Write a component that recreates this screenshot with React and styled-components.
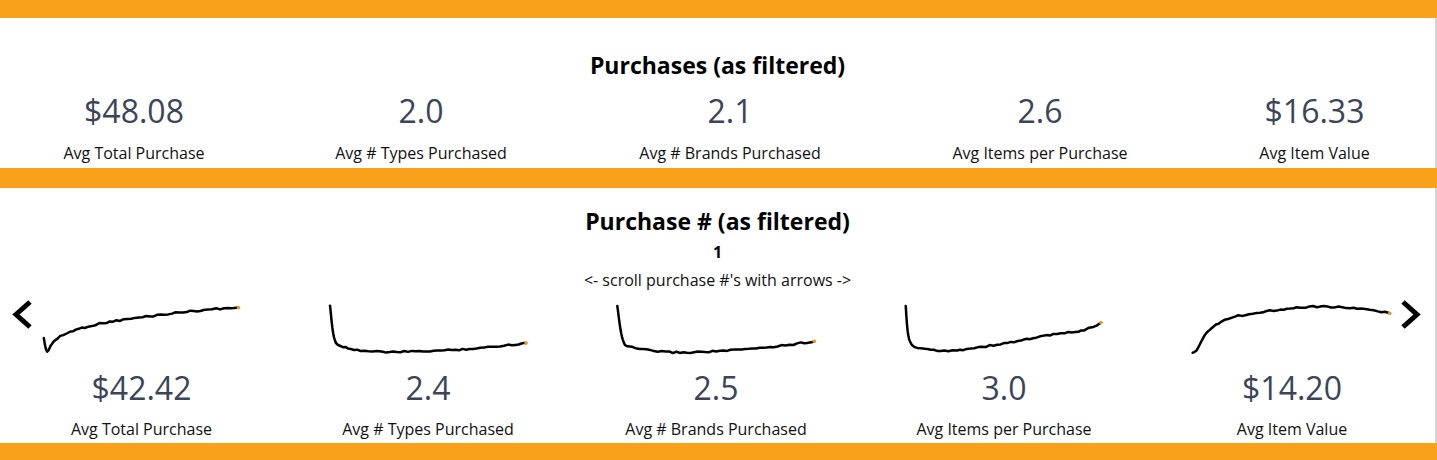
import React from "react"
import styled, { createGlobalStyle } from "styled-components"

const ORANGE = "#f9a11b"
const INK = "#3c4558"

const GlobalStyle = createGlobalStyle`
  html, body {
    margin: 0;
    padding: 0;
    background: #fff;
  }
  body {
    font-family: "Open Sans", "Liberation Sans", sans-serif;
  }
`

const summary = [
  { value: "$48.08", label: "Avg Total Purchase" },
  { value: "2.0", label: "Avg # Types Purchased" },
  { value: "2.1", label: "Avg # Brands Purchased" },
  { value: "2.6", label: "Avg Items per Purchase" },
  { value: "$16.33", label: "Avg Item Value" },
]

// key points of each trend line, in a 200x52 box
const trends = [
  {
    value: "$42.42",
    label: "Avg Total Purchase",
    pts: [[1.8, 35], [5.2, 48.7], [11.5, 38.7], [28.5, 28.7], [61.5, 20], [111.5, 12.7], [161.5, 7], [196.5, 4.7]],
  },
  {
    value: "2.4",
    label: "Avg # Types Purchased",
    pts: [[2, 2.7], [6.3, 35.3], [15, 43.7], [48.7, 48.7], [102, 48], [152, 45], [198, 40]],
  },
  {
    value: "2.5",
    label: "Avg # Brands Purchased",
    pts: [[1.3, 3], [6.7, 36.3], [16, 44.5], [57, 49.3], [104, 48], [154, 44], [198.3, 38.3]],
  },
  {
    value: "3.0",
    label: "Avg Items per Purchase",
    pts: [[1.7, 3], [6, 38.7], [21, 46], [53, 47], [103, 40], [136, 33.7], [179.7, 27], [197, 19.7]],
  },
  {
    value: "$14.20",
    label: "Avg Item Value",
    pts: [[0.7, 49.7], [4.5, 47.5], [9, 39], [15, 29], [24, 21.5], [40, 14.5], [65, 9.7], [98, 5.3], [125, 3.7], [165, 5.3], [197.7, 10.3]],
  },
]

const rand = (i, seed) => {
  const x = Math.sin(i * 12.9898 + seed * 78.233) * 43758.5453
  return x - Math.floor(x)
}

const trendPath = (pts, seed) => {
  const out = []
  const cr = (a, b, c, d, t) =>
    0.5 * (2 * b + (-a + c) * t + (2 * a - 5 * b + 4 * c - d) * t * t + (-a + 3 * b - 3 * c + d) * t * t * t)
  for (let s = 0; s < pts.length - 1; s++) {
    const p0 = pts[Math.max(s - 1, 0)]
    const p1 = pts[s]
    const p2 = pts[s + 1]
    const p3 = pts[Math.min(s + 2, pts.length - 1)]
    const len = Math.hypot(p2[0] - p1[0], p2[1] - p1[1])
    const n = Math.max(2, Math.round(len / 3.5))
    for (let k = 0; k < n; k++) {
      const t = k / n
      out.push([cr(p0[0], p1[0], p2[0], p3[0], t), cr(p0[1], p1[1], p2[1], p3[1], t)])
    }
  }
  out.push(pts[pts.length - 1])
  return out
    .map(([x, y], i) => {
      const j = x > 14 && i < out.length - 1 ? (rand(i, seed) - 0.5) * 1.6 : 0
      return `${i ? "L" : "M"}${x.toFixed(1)} ${(y + j).toFixed(1)}`
    })
    .join(" ")
}

const Trend = ({ pts, seed }) => {
  const end = pts[pts.length - 1]
  return (
    <TrendSvg width="200" height="52" viewBox="0 0 200 52">
      <path d={trendPath(pts, seed)} fill="none" stroke="#000" strokeWidth="2.5" strokeLinejoin="round" strokeLinecap="round" />
      <circle cx={end[0]} cy={end[1]} r="1.8" fill="#f7941d" />
    </TrendSvg>
  )
}

const Chevron = ({ dir }) => (
  <svg width="24" height="32" viewBox="0 0 24 32">
    <polyline
      points={dir === "left" ? "19,3 5,15.5 19,28" : "5,3 19,15.5 5,28"}
      fill="none"
      stroke="#000"
      strokeWidth="5"
      strokeLinejoin="miter"
    />
  </svg>
)

export default function App() {
  return (
    <Page>
      <GlobalStyle />
      <Band h={18} />
      <Section h={150} pt={33}>
        <Title>Purchases (as filtered)</Title>
        <SummaryGrid>
          {summary.map(s => (
            <Card key={s.label}>
              <Value>{s.value}</Value>
              <Label>{s.label}</Label>
            </Card>
          ))}
        </SummaryGrid>
      </Section>
      <Band h={20} />
      <Section h={255} pt={19}>
        <Title>Purchase # (as filtered)</Title>
        <PurchaseNo>1</PurchaseNo>
        <Hint>&lt;- scroll purchase #'s with arrows -&gt;</Hint>
        <TrendGrid>
          {trends.map((s, i) => (
            <Card key={s.label}>
              <Trend pts={s.pts} seed={i + 1} />
              <Value top={15}>{s.value}</Value>
              <Label top={12}>{s.label}</Label>
            </Card>
          ))}
        </TrendGrid>
        <NavButton side="left" aria-label="previous purchase">
          <Chevron dir="left" />
        </NavButton>
        <NavButton side="right" aria-label="next purchase">
          <Chevron dir="right" />
        </NavButton>
      </Section>
      <Band h={17} />
    </Page>
  )
}

const Page = styled.div`
  width: 1437px;
  display: flex;
  flex-direction: column;
`

const Band = styled.div`
  height: ${p => p.h}px;
  background: ${ORANGE};
`

const Section = styled.section`
  position: relative;
  box-sizing: border-box;
  height: ${p => p.h}px;
  padding-top: ${p => p.pt}px;
  border-right: 2px solid #d4d4d4;
  display: flex;
  flex-direction: column;
  align-items: center;
`

const Title = styled.h2`
  margin: 0;
  font-size: 23px;
  line-height: 28px;
  font-weight: 700;
  color: #000;
`

const PurchaseNo = styled.div`
  margin-top: 6px;
  font-size: 16px;
  line-height: 22px;
  font-weight: 700;
  color: #000;
`

const Hint = styled.div`
  margin-top: 6px;
  font-size: 16px;
  line-height: 22px;
  color: #111;
`

const SummaryGrid = styled.div`
  align-self: stretch;
  margin-top: 14px;
  display: grid;
  grid-template-columns: 268px 306px 312px 308px 241px;
`

const TrendGrid = styled.div`
  align-self: stretch;
  margin-top: 12px;
  display: grid;
  grid-template-columns: 283px 290px 286px 290px 286px;
`

const Card = styled.div`
  display: flex;
  flex-direction: column;
  align-items: center;
`

const TrendSvg = styled.svg`
  display: block;
  overflow: visible;
`

const Value = styled.div`
  margin-top: ${p => p.top || 0}px;
  font-size: 32px;
  line-height: 36px;
  color: ${INK};
`

const Label = styled.div`
  margin-top: ${p => p.top || 13}px;
  font-size: 16px;
  line-height: 22px;
  color: #111;
  white-space: nowrap;
`

const NavButton = styled.button`
  position: absolute;
  top: 111px;
  ${p => (p.side === "left" ? "left: 11px;" : "right: 13px;")}
  padding: 0;
  border: 0;
  background: none;
  cursor: pointer;
  line-height: 0;
`
